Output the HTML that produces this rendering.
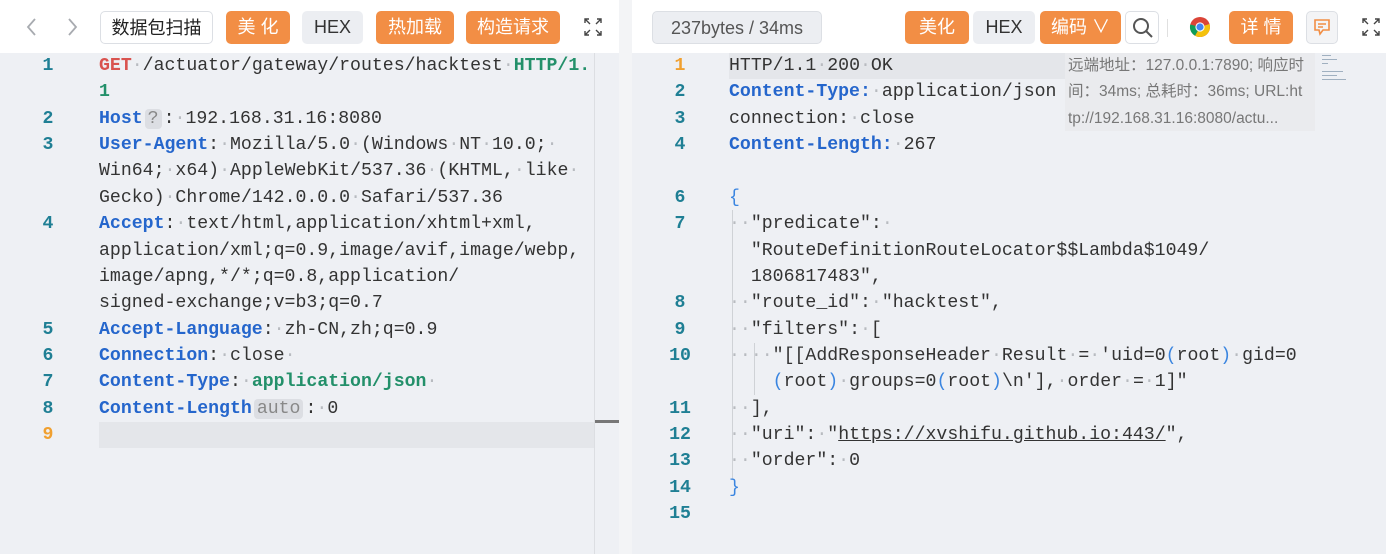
<!DOCTYPE html>
<html><head><meta charset="utf-8"><style>
*{margin:0;padding:0;box-sizing:border-box}
body{width:1386px;height:554px;overflow:hidden;background:#f3f4f6;font-family:"Liberation Sans","Noto Sans CJK SC",sans-serif;position:relative}
.pane{position:absolute;top:0;height:554px;background:#eef0f4}
.tb{position:absolute;left:0;right:0;top:0;height:53px;background:#fff}
.btn{position:absolute;top:11px;height:33px;line-height:33px;border-radius:5px;font-size:18px;text-align:center}
.or{background:#f28e45;color:#fff}
.gr{background:#eceef2;color:#333}
.wh{background:#fff;border:1px solid #dcdfe4;color:#222}
.row{position:absolute;height:26.35px;line-height:26.35px;font-family:"Liberation Mono",monospace;font-size:18.2px;color:#333;white-space:pre}
.ln{position:absolute;width:40px;text-align:center;height:26.35px;line-height:26.35px;font-family:"Liberation Mono",monospace;font-size:18.2px;color:#1f7f94;font-weight:bold}
.d{color:#b8bbc0}
.k{color:#2566cc;font-weight:bold}
.g{color:#23906a;font-weight:bold}
.r{color:#d9534f;font-weight:bold}
.b{color:#3a85e0}
.tag{background:#dcdee3;color:#888;border-radius:4px;padding:0 3px;margin:0 2px}
</style></head><body>
<div class="pane" style="left:0;width:619px">
<div class="tb">
<svg style="position:absolute;left:24px;top:17px" width="16" height="20"><path d="M11 2 L4 10 L11 18" stroke="#a8abb0" stroke-width="1.8" fill="none"/></svg>
<svg style="position:absolute;left:64px;top:17px" width="16" height="20"><path d="M5 2 L12 10 L5 18" stroke="#a8abb0" stroke-width="1.8" fill="none"/></svg>
<div class="btn wh" style="left:100px;width:113px">数据包扫描</div>
<div class="btn or" style="left:226px;width:64px">美 化</div>
<div class="btn gr" style="left:302px;width:61px">HEX</div>
<div class="btn or" style="left:376px;width:78px">热加载</div>
<div class="btn or" style="left:466px;width:94px">构造请求</div>
<svg style="position:absolute;left:584px;top:18px" width="18" height="18" stroke="#444" stroke-width="1.4" fill="none"><path d="M1 5V1H5M1 1L6 6M13 1H17V5M17 1L12 6M1 13V17H5M1 17L6 12M17 13V17H13M17 17L12 12"/></svg>
</div>
<div style="position:absolute;left:594px;top:53px;width:1px;height:501px;background:#dcdee2"></div>
<div style="position:absolute;left:595px;top:420px;width:24px;height:3px;background:#777"></div>
<div style="position:absolute;left:99px;top:421.9px;width:495px;height:26.35px;background:#e4e6ea"></div>
<div class="ln" style="left:28px;top:53px">1</div>
<div class="ln" style="left:28px;top:105.7px">2</div>
<div class="ln" style="left:28px;top:132px">3</div>
<div class="ln" style="left:28px;top:211.1px">4</div>
<div class="ln" style="left:28px;top:316.5px">5</div>
<div class="ln" style="left:28px;top:342.9px">6</div>
<div class="ln" style="left:28px;top:369.2px">7</div>
<div class="ln" style="left:28px;top:395.6px">8</div>
<div class="ln" style="left:28px;top:421.9px;color:#f0a030">9</div>
<div class="row" style="left:99px;top:53px"><span class="r">GET</span><span class="d">·</span>/actuator/gateway/routes/hacktest<span class="d">·</span><span class="g">HTTP/1.</span></div>
<div class="row" style="left:99px;top:79.4px"><span class="g">1</span></div>
<div class="row" style="left:99px;top:105.7px"><span class="k">Host</span><span class="tag">?</span>:<span class="d">·</span>192.168.31.16:8080</div>
<div class="row" style="left:99px;top:132px"><span class="k">User-Agent</span>:<span class="d">·</span>Mozilla/5.0<span class="d">·</span>(Windows<span class="d">·</span>NT<span class="d">·</span>10.0;<span class="d">·</span></div>
<div class="row" style="left:99px;top:158.4px">Win64;<span class="d">·</span>x64)<span class="d">·</span>AppleWebKit/537.36<span class="d">·</span>(KHTML,<span class="d">·</span>like<span class="d">·</span></div>
<div class="row" style="left:99px;top:184.7px">Gecko)<span class="d">·</span>Chrome/142.0.0.0<span class="d">·</span>Safari/537.36</div>
<div class="row" style="left:99px;top:211.1px"><span class="k">Accept</span>:<span class="d">·</span>text/html,application/xhtml+xml,</div>
<div class="row" style="left:99px;top:237.5px">application/xml;q=0.9,image/avif,image/webp,</div>
<div class="row" style="left:99px;top:263.8px">image/apng,*/*;q=0.8,application/</div>
<div class="row" style="left:99px;top:290.2px">signed-exchange;v=b3;q=0.7</div>
<div class="row" style="left:99px;top:316.5px"><span class="k">Accept-Language</span>:<span class="d">·</span>zh-CN,zh;q=0.9</div>
<div class="row" style="left:99px;top:342.9px"><span class="k">Connection</span>:<span class="d">·</span>close<span class="d">·</span></div>
<div class="row" style="left:99px;top:369.2px"><span class="k">Content-Type</span>:<span class="d">·</span><span class="g">application/json</span><span class="d">·</span></div>
<div class="row" style="left:99px;top:395.6px"><span class="k">Content-Length</span><span class="tag">auto</span>:<span class="d">·</span>0</div>
</div>

<div class="pane" style="left:632px;width:754px">
<div class="tb">
<div class="btn gr" style="left:20px;width:170px;border:1px solid #dcdfe4;color:#555">237bytes / 34ms</div>
<div class="btn or" style="left:273px;width:64px">美化</div>
<div class="btn gr" style="left:341px;width:62px">HEX</div>
<div class="btn or" style="left:408px;width:81px">编码 &#x2228;</div>
<div class="btn wh" style="left:493px;width:34px"></div>
<svg style="position:absolute;left:499px;top:16px" width="24" height="24" stroke="#555" stroke-width="2" fill="none"><circle cx="10" cy="10" r="7"/><path d="M15 15L21 21"/></svg>
<div style="position:absolute;left:535px;top:19px;width:1px;height:18px;background:#e0e0e0"></div>
<svg style="position:absolute;left:557px;top:16px" width="22" height="22" viewBox="0 0 22 22"><circle cx="11" cy="11" r="10" fill="#db4437"/><path d="M11 11 L20.5 8 A10 10 0 0 1 6 19.7Z" fill="#f4c20d"/><path d="M11 11 L6 19.7 A10 10 0 0 1 1.3 8.5Z" fill="#0f9d58"/><circle cx="11" cy="11" r="4.6" fill="#fff"/><circle cx="11" cy="11" r="3.6" fill="#4285f4"/></svg>
<div class="btn or" style="left:597px;width:64px">详 情</div>
<div class="btn gr" style="left:674px;width:32px;border:1px solid #dcdfe4;background:#f3f4f6"></div>
<svg style="position:absolute;left:681px;top:18px" width="18" height="18" stroke="#f28e45" stroke-width="1.6" fill="none"><path d="M2 2H16V12H10L7 16L6 12H2Z M5 6H13 M5 9H10"/></svg>
<svg style="position:absolute;left:730px;top:18px" width="18" height="18" stroke="#444" stroke-width="1.4" fill="none"><path d="M1 5V1H5M1 1L6 6M13 1H17V5M17 1L12 6M1 13V17H5M1 17L6 12M17 13V17H13M17 17L12 12"/></svg>
</div>
<div style="position:absolute;left:97px;top:53px;width:336px;height:26.35px;background:#e4e6ea"></div>
<div style="position:absolute;left:433px;top:53px;width:250px;height:78px;background:#eaebee;color:#777;font-size:15.5px;line-height:26.3px;padding-left:3px;overflow:hidden">远端地址：127.0.0.1:7890; 响应时<br>间：34ms; 总耗时：36ms; URL:ht<br>tp://192.168.31.16:8080/actu...</div>
<div style="position:absolute;left:100px;top:210px;width:1px;height:270px;background:#cfd2d6"></div>
<div style="position:absolute;left:122px;top:343px;width:1px;height:52px;background:#cfd2d6"></div>
<div style="position:absolute;left:690px;top:53px;width:40px;height:40px;font-size:3px;color:#9ab;line-height:4px">▬▬▬<br>▬▬▬▬▬<br>▬▬<br><br>▬▬▬▬▬▬▬<br>▬▬▬▬▬<br>▬▬▬▬▬▬▬▬</div>
<div class="ln" style="left:28px;top:53px;color:#f0a030">1</div>
<div class="ln" style="left:28px;top:79.4px">2</div>
<div class="ln" style="left:28px;top:105.7px">3</div>
<div class="ln" style="left:28px;top:132px">4</div>
<div class="ln" style="left:28px;top:184.7px">6</div>
<div class="ln" style="left:28px;top:211.1px">7</div>
<div class="ln" style="left:28px;top:290.2px">8</div>
<div class="ln" style="left:28px;top:316.5px">9</div>
<div class="ln" style="left:28px;top:342.9px">10</div>
<div class="ln" style="left:28px;top:395.6px">11</div>
<div class="ln" style="left:28px;top:421.9px">12</div>
<div class="ln" style="left:28px;top:448.3px">13</div>
<div class="ln" style="left:28px;top:474.6px">14</div>
<div class="ln" style="left:28px;top:501px">15</div>
<div class="row" style="left:97px;top:53px">HTTP/1.1<span class="d">·</span>200<span class="d">·</span>OK</div>
<div class="row" style="left:97px;top:79.4px"><span class="k">Content-Type:</span><span class="d">·</span>application/json</div>
<div class="row" style="left:97px;top:105.7px">connection:<span class="d">·</span>close</div>
<div class="row" style="left:97px;top:132px"><span class="k">Content-Length:</span><span class="d">·</span>267</div>
<div class="row" style="left:97px;top:184.7px"><span class="b">{</span></div>
<div class="row" style="left:97px;top:211.1px"><span class="d">··</span>"predicate":<span class="d">·</span></div>
<div class="row" style="left:97px;top:237.5px">  "RouteDefinitionRouteLocator$$Lambda$1049/</div>
<div class="row" style="left:97px;top:263.8px">  1806817483",</div>
<div class="row" style="left:97px;top:290.2px"><span class="d">··</span>"route_id":<span class="d">·</span>"hacktest",</div>
<div class="row" style="left:97px;top:316.5px"><span class="d">··</span>"filters":<span class="d">·</span>[</div>
<div class="row" style="left:97px;top:342.9px"><span class="d">····</span>"[[AddResponseHeader<span class="d">·</span>Result<span class="d">·</span>=<span class="d">·</span>'uid=0<span class="b">(</span>root<span class="b">)</span><span class="d">·</span>gid=0</div>
<div class="row" style="left:97px;top:369.2px">    <span class="b">(</span>root<span class="b">)</span><span class="d">·</span>groups=0<span class="b">(</span>root<span class="b">)</span>\n'],<span class="d">·</span>order<span class="d">·</span>=<span class="d">·</span>1]"</div>
<div class="row" style="left:97px;top:395.6px"><span class="d">··</span>],</div>
<div class="row" style="left:97px;top:421.9px"><span class="d">··</span>"uri":<span class="d">·</span>"<span style="text-decoration:underline">https://xvshifu.github.io:443/</span>",</div>
<div class="row" style="left:97px;top:448.3px"><span class="d">··</span>"order":<span class="d">·</span>0</div>
<div class="row" style="left:97px;top:474.6px"><span class="b">}</span></div>
</div>
</body></html>
